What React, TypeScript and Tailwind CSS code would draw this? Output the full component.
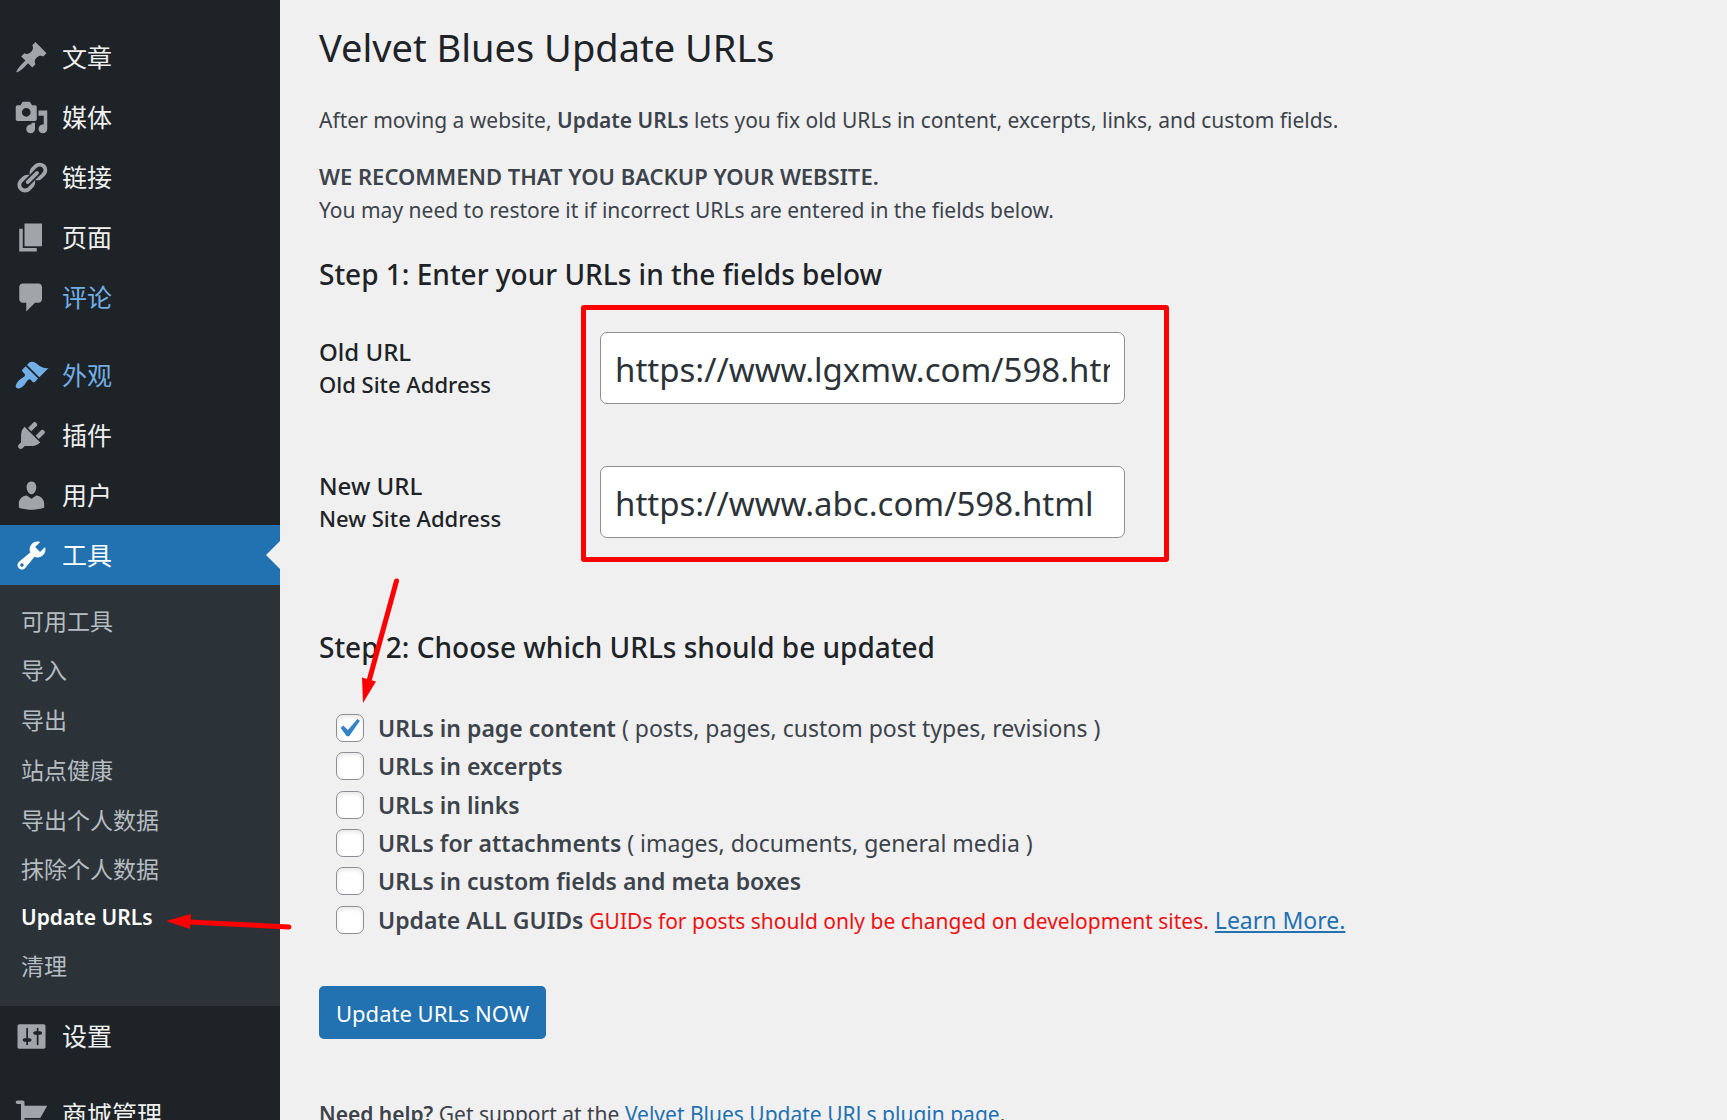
import { useState } from 'react';

const icons = {
  post: 'M10.44 3.02l1.82-1.82 6.36 6.35-1.83 1.82c-1.05-.68-2.48-.57-3.41.36l-.75.75c-.92.93-1.04 2.35-.35 3.41l-1.83 1.82-2.41-2.41-2.8 2.79c-.42.42-3.38 2.71-3.8 2.29s1.86-3.39 2.28-3.81l2.79-2.79L4.1 9.36l1.83-1.82c1.05.69 2.48.57 3.4-.36l.75-.75c.93-.92 1.05-2.35.36-3.41z',
  media: 'M13 11V4c0-.55-.45-1-1-1h-1.67L9 1H5L3.67 3H2c-.55 0-1 .45-1 1v7c0 .55.45 1 1 1h10c.55 0 1-.45 1-1zM7 4.5c1.38 0 2.5 1.12 2.5 2.5S8.38 9.5 7 9.5 4.5 8.38 4.5 7 5.62 4.5 7 4.5zM14 6h5v10.5c0 1.38-1.12 2.5-2.5 2.5S14 17.88 14 16.5s1.12-2.5 2.5-2.5c.17 0 .34.02.5.05V9h-3V6zm-4 8.05V13h2v3.5c0 1.38-1.12 2.5-2.5 2.5S7 17.88 7 16.5 8.12 14 9.5 14c.17 0 .34.02.5.05z',
  links: 'M17.74 2.76c1.68 1.69 1.68 4.41 0 6.1l-1.53 1.52c-1.12 1.12-2.7 1.47-4.14 1.09l2.62-2.61.76-.77.76-.76c.84-.84.84-2.2 0-3.04-.84-.85-2.2-.85-3.04 0l-.77.76-3.38 3.38c-.37-1.44-.02-3.02 1.1-4.14l1.52-1.53c1.69-1.68 4.42-1.68 6.1 0zM8.59 13.43l5.34-5.34c.42-.42.42-1.1 0-1.52-.44-.43-1.13-.39-1.53 0l-5.33 5.34c-.42.42-.42 1.1 0 1.52.44.43 1.13.39 1.52 0zm-.76 2.29l4.14-4.15c.38 1.44.03 3.02-1.09 4.14l-1.52 1.53c-1.69 1.68-4.41 1.68-6.1 0-1.68-1.68-1.68-4.42 0-6.1l1.53-1.52c1.12-1.12 2.7-1.47 4.14-1.1l-4.14 4.15c-.85.84-.85 2.2 0 3.05.84.84 2.2.84 3.04 0z',
  page: 'M6 15V2h10v13H6zm-1 1h8v2H3V5h2v11z',
  comments: 'M5 2h9c1.1 0 2 .9 2 2v7c0 1.1-.9 2-2 2h-2l-5 5v-5H5c-1.1 0-2-.9-2-2V4c0-1.1.9-2 2-2z',
  appearance: 'M14.48 11.06L7.41 3.99l1.5-1.5c.5-.56 2.3-.47 3.51.32 1.21.8 1.43 1.28 2.91 2.1 1.18.64 2.45 1.26 4.45.85zm-.71.71L6.7 4.7 4.93 6.47c-.39.39-.39 1.02 0 1.41l1.06 1.06c.39.39.39 1.03 0 1.42-.6.6-1.43 1.11-2.21 1.69-.35.26-.7.53-1.01.84C1.43 14.23.4 16.08 1.4 17.07c.99 1 2.84-.03 4.18-1.36.31-.31.58-.66.85-1.02.57-.78 1.08-1.61 1.69-2.21.39-.39 1.02-.39 1.41 0l1.06 1.06c.39.39 1.02.39 1.41 0z',
  plugins: 'M13.11 4.36L9.87 7.6 8 5.73l3.24-3.24c.35-.34 1.05-.2 1.56.32.52.51.66 1.21.31 1.55zm-8 1.77l.91-1.12 9.01 9.01-1.19.84c-.71.71-2.63 1.16-3.82 1.16H6.14L4.9 17.26c-.59.59-1.54.59-2.12 0-.59-.58-.59-1.53 0-2.12l1.24-1.24v-3.88c0-1.13.4-3.19 1.09-3.89zm7.26 3.97l3.24-3.24c.34-.35 1.04-.21 1.55.31.52.51.66 1.21.31 1.55l-3.24 3.25z',
  users: 'M10 9.25c-2.27 0-2.73-3.44-2.73-3.44C7 4.02 7.82 2 9.97 2c2.16 0 2.98 2.02 2.71 3.81 0 0-.41 3.44-2.68 3.44zm0 2.57L12.72 10c2.39 0 4.52 2.33 4.52 4.53v2.49s-3.65 1.13-7.24 1.13c-3.65 0-7.24-1.13-7.24-1.13v-2.49c0-2.25 1.94-4.48 4.47-4.48z',
  tools: 'M16.68 9.77c-1.34 1.34-3.3 1.67-4.95.99l-5.41 6.52c-.99.99-2.59.99-3.58 0s-.99-2.59 0-3.57l6.52-5.42c-.68-1.65-.35-3.61.99-4.95 1.28-1.28 3.12-1.62 4.72-1.06l-2.89 2.89 2.82 2.82 2.86-2.87c.53 1.58.18 3.39-1.08 4.65zM3.81 16.21c.4.39 1.04.39 1.43 0 .4-.4.4-1.04 0-1.43-.39-.4-1.03-.4-1.43 0-.39.39-.39 1.03 0 1.43z',
  settings: 'M18 16V4c0-.55-.45-1-1-1H3c-.55 0-1 .45-1 1v12c0 .55.45 1 1 1h14c.55 0 1-.45 1-1zM8 11h1c.55 0 1 .45 1 1s-.45 1-1 1H8v1.5c0 .28-.22.5-.5.5s-.5-.22-.5-.5V13H6c-.55 0-1-.45-1-1s.45-1 1-1h1V5.5c0-.28.22-.5.5-.5s.5.22.5.5V11zm5-2h-1c-.55 0-1-.45-1-1s.45-1 1-1h1V5.5c0-.28.22-.5.5-.5s.5.22.5.5V7h1c.55 0 1 .45 1 1s-.45 1-1 1h-1v5.5c0 .28-.22.5-.5.5s-.5-.22-.5-.5V9z',
  cart: 'M6 13h9c.55 0 1 .45 1 1s-.45 1-1 1H5c-.55 0-1-.45-1-1V4H2c-.55 0-1-.45-1-1s.45-1 1-1h3c.55 0 1 .45 1 1v2h13l-4 7H6v1zm-.5 3c.83 0 1.5.67 1.5 1.5S6.33 19 5.5 19 4 18.33 4 17.5 4.67 16 5.5 16zm9 0c.83 0 1.5.67 1.5 1.5s-.67 1.5-1.5 1.5-1.5-.67-1.5-1.5.67-1.5 1.5-1.5z',
};

type IconName = keyof typeof icons;

function Icon({ name, className }: { name: IconName; className: string }) {
  return (
    <svg viewBox="0 0 20 20" className={`size-[35px] ${className}`} fill="currentColor" aria-hidden="true">
      <path d={icons[name]} />
    </svg>
  );
}

type Tone = 'normal' | 'hoverText' | 'hover' | 'current';

const tones: Record<Tone, { row: string; icon: string }> = {
  normal: { row: 'text-[#f0f0f1]', icon: 'text-[#a0a5aa]' },
  hoverText: { row: 'text-[#72aee6]', icon: 'text-[#a0a5aa]' },
  hover: { row: 'text-[#72aee6]', icon: 'text-[#72aee6]' },
  current: { row: 'bg-[#2271b1] text-white', icon: 'text-white' },
};

function MenuItem({ icon, label, tone = 'normal' }: { icon: IconName; label: string; tone?: Tone }) {
  return (
    <a href="#" className={`relative flex h-[60px] items-center text-[25px] leading-[34px] ${tones[tone].row}`}>
      <span className="flex w-[62px] shrink-0 justify-center">
        <Icon name={icon} className={tones[tone].icon} />
      </span>
      {label}
      {tone === 'current' && (
        <span className="absolute top-4 right-0 border-y-[14px] border-r-[14px] border-y-transparent border-r-[#f0f0f1]" />
      )}
    </a>
  );
}

const submenu = ['可用工具', '导入', '导出', '站点健康', '导出个人数据', '抹除个人数据', 'Update URLs', '清理'];

function Sidebar() {
  return (
    <nav className="relative z-10 w-[280px] shrink-0 bg-[#1d2327] pt-[27px]">
      <MenuItem icon="post" label="文章" />
      <MenuItem icon="media" label="媒体" />
      <MenuItem icon="links" label="链接" />
      <MenuItem icon="page" label="页面" />
      <MenuItem icon="comments" label="评论" tone="hoverText" />
      <div className="h-[18px]" />
      <MenuItem icon="appearance" label="外观" tone="hover" />
      <MenuItem icon="plugins" label="插件" />
      <MenuItem icon="users" label="用户" />
      <MenuItem icon="tools" label="工具" tone="current" />
      <ul className="flex min-h-[421px] flex-col bg-[#2c3338] pt-[11px] pb-[15px]">
        {submenu.map((label) => (
          <li key={label} className="relative flex flex-1 items-center">
            {label === 'Update URLs' ? (
              <>
                <a href="#" className="px-[21px] text-[21px] font-semibold text-white">
                  {label}
                </a>
                <svg
                  viewBox="0 0 130 20"
                  className="pointer-events-none absolute top-4 left-[165px] h-5 w-[130px]"
                  aria-hidden="true"
                >
                  <path d="M24 11L124 16" stroke="#fe0000" strokeWidth="5" strokeLinecap="round" />
                  <path d="M1 10L26 3L25 18Z" fill="#fe0000" />
                </svg>
              </>
            ) : (
              <a href="#" className="px-[21px] text-[23px] text-[#b5bcc2]">
                {label}
              </a>
            )}
          </li>
        ))}
      </ul>
      <MenuItem icon="settings" label="设置" />
      <div className="h-[18px]" />
      <MenuItem icon="cart" label="商城管理" />
    </nav>
  );
}

function UrlField({ id, title, hint, value }: { id: string; title: string; hint: string; value: string }) {
  const [text, setText] = useState(value);
  return (
    <>
      <label htmlFor={id} className="pt-[3px] font-medium text-[#1d2327]">
        <span className="block text-[24px] leading-[34px]">{title}</span>
        <span className="block text-[22px] leading-[30px]">{hint}</span>
      </label>
      <input
        id={id}
        type="text"
        value={text}
        onChange={(e) => setText(e.target.value)}
        className="h-[72px] w-full rounded-[7px] border border-[#8c8f94] bg-white px-[14px] pt-0.5 text-[33px] text-[#2c3338]"
      />
    </>
  );
}

const options = [
  { id: 'content', label: 'URLs in page content', note: '( posts, pages, custom post types, revisions )', checked: true },
  { id: 'excerpts', label: 'URLs in excerpts' },
  { id: 'links', label: 'URLs in links' },
  { id: 'attachments', label: 'URLs for attachments', note: '( images, documents, general media )' },
  { id: 'custom', label: 'URLs in custom fields and meta boxes' },
  { id: 'guids', label: 'Update ALL GUIDs', warning: 'GUIDs for posts should only be changed on development sites.' },
];

export default function App() {
  return (
    <div className="flex h-screen overflow-hidden bg-[#f0f0f1] font-['Noto_Sans','Noto_Sans_CJK_SC',sans-serif] text-[#3c434a]">
      <Sidebar />
      <main className="min-w-0 flex-1 pt-[23px] pl-[39px] text-[21px] leading-[34px]">
        <h1 className="text-[38px] leading-[48px] text-[#1d2327]">Velvet Blues Update URLs</h1>
        <p className="mt-8">
          After moving a website, <strong className="font-semibold">Update URLs</strong> lets you fix old URLs in content,
          excerpts, links, and custom fields.
        </p>
        <p className="mt-[22px]">
          <strong className="block text-[22px] font-semibold">WE RECOMMEND THAT YOU BACKUP YOUR WEBSITE.</strong>
          You may need to restore it if incorrect URLs are entered in the fields below.
        </p>

        <h2 className="mt-[27px] text-[28px] leading-10 font-medium text-[#1d2327]">
          Step 1: Enter your URLs in the fields below
        </h2>
        <div className="relative mt-[38px] grid grid-cols-[281px_525px] gap-y-[62px]">
          <UrlField id="old" title="Old URL" hint="Old Site Address" value="https://www.lgxmw.com/598.html" />
          <UrlField id="new" title="New URL" hint="New Site Address" value="https://www.abc.com/598.html" />
          <div className="pointer-events-none absolute -top-[27px] -bottom-6 left-[262px] w-[588px] rounded-[3px] border-5 border-[#fe0000]" />
        </div>

        <section className="relative mt-[89px]">
          <h2 className="text-[28px] leading-10 font-medium text-[#1d2327]">Step 2: Choose which URLs should be updated</h2>
          <svg
            viewBox="0 0 40 130"
            className="pointer-events-none absolute -top-[51px] left-10 h-[130px] w-10"
            aria-hidden="true"
          >
            <path d="M37.5 5L10 105" stroke="#fe0000" strokeWidth="5" strokeLinecap="round" />
            <path d="M4 127L3 101.500L17 105.500Z" fill="#fe0000" />
          </svg>
          <ul className="mt-[42px] flex min-h-[231px] flex-col pl-[17px] text-[23px]">
            {options.map((o) => (
              <li key={o.id} className="flex flex-1 items-center">
                <span className="relative mr-[14px] size-7 shrink-0">
                  <input
                    id={o.id}
                    type="checkbox"
                    defaultChecked={o.checked}
                    className="peer block size-7 appearance-none rounded-[7px] border border-[#8c8f94] bg-white shadow-[inset_0_2px_4px_rgba(0,0,0,0.1)]"
                  />
                  <svg
                    viewBox="0 0 20 20"
                    className="pointer-events-none absolute -top-1 -left-[6px] hidden size-[37px] max-w-none peer-checked:block"
                    aria-hidden="true"
                  >
                    <path d="M14.830 4.890l1.340.94-5.810 8.380H9.020L5.780 9.670l1.340-1.250 2.570 2.400z" fill="#3582c4" />
                  </svg>
                </span>
                <div className="whitespace-nowrap">
                  <label htmlFor={o.id}>
                    <strong className="font-semibold">{o.label}</strong>
                    {o.note && <> {o.note}</>}
                  </label>
                  {o.warning && (
                    <>
                      {' '}
                      <span className="text-[21px] text-[#e11]">{o.warning}</span>{' '}
                      <a href="#" className="text-[#2271b1] underline">
                        Learn More.
                      </a>
                    </>
                  )}
                </div>
              </li>
            ))}
          </ul>
        </section>

        <button type="button" className="mt-[46px] block h-[53px] rounded-[5px] bg-[#2271b1] px-[17px] text-[22px] text-white">
          Update URLs NOW
        </button>

        <p className="mt-[58px]">
          <strong className="font-semibold">Need help?</strong> Get support at the{' '}
          <a href="#" className="text-[#2271b1]">
            Velvet Blues Update URLs plugin page
          </a>
          .
        </p>
      </main>
    </div>
  );
}
